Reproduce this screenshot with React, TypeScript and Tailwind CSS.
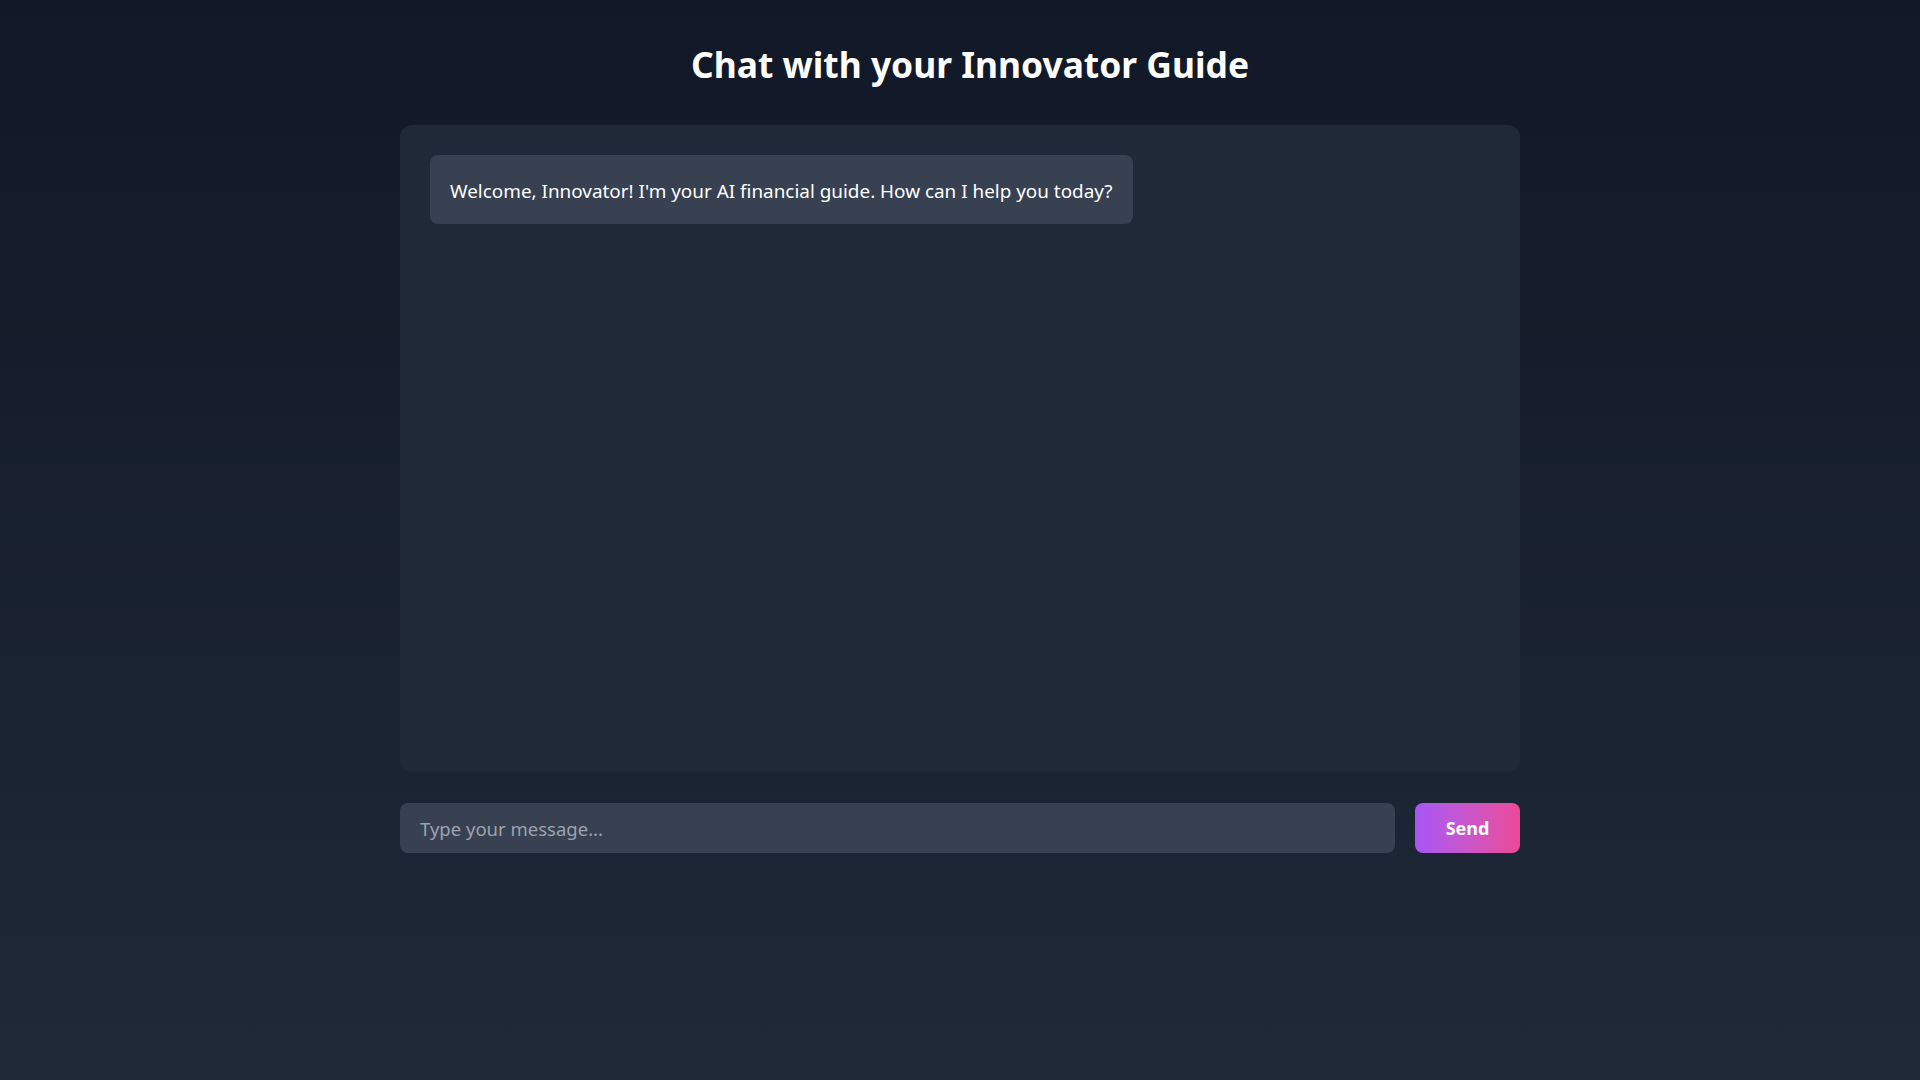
import React from "react";

export default function App() {
  return (
    <div
      className="min-h-screen w-full bg-gradient-to-b from-[#111827] to-[#1f2937] text-white"
      style={{ fontFamily: '"Noto Sans", "Open Sans", sans-serif' }}
    >
      <div className="mx-auto w-[1120px] pt-[44px]">
        <h1 className="pl-[20px] text-center text-[35.4px] font-bold leading-[40px] text-white">
          Chat with your Innovator Guide
        </h1>
        <div className="mt-[41px] h-[647px] rounded-xl bg-[#1f2937] p-[30px]">
          <div className="flex">
            <div className="rounded-lg bg-[#374151] px-5 pb-[18px] pt-[22px] text-[18.9px] leading-[29px] text-white">
              Welcome, Innovator! I'm your AI financial guide. How can I help you today?
            </div>
          </div>
        </div>
        <div className="mt-[31px] flex gap-5">
          <input
            type="text"
            placeholder="Type your message..."
            className="h-[50px] flex-1 rounded-lg bg-[#374151] px-5 text-[18.5px] text-white placeholder-[#9ca3af] outline-none"
          />
          <button className="h-[50px] w-[105px] rounded-lg bg-gradient-to-r from-[#a855f7] to-[#ec4899] text-[18px] font-bold text-white">
            Send
          </button>
        </div>
      </div>
    </div>
  );
}
